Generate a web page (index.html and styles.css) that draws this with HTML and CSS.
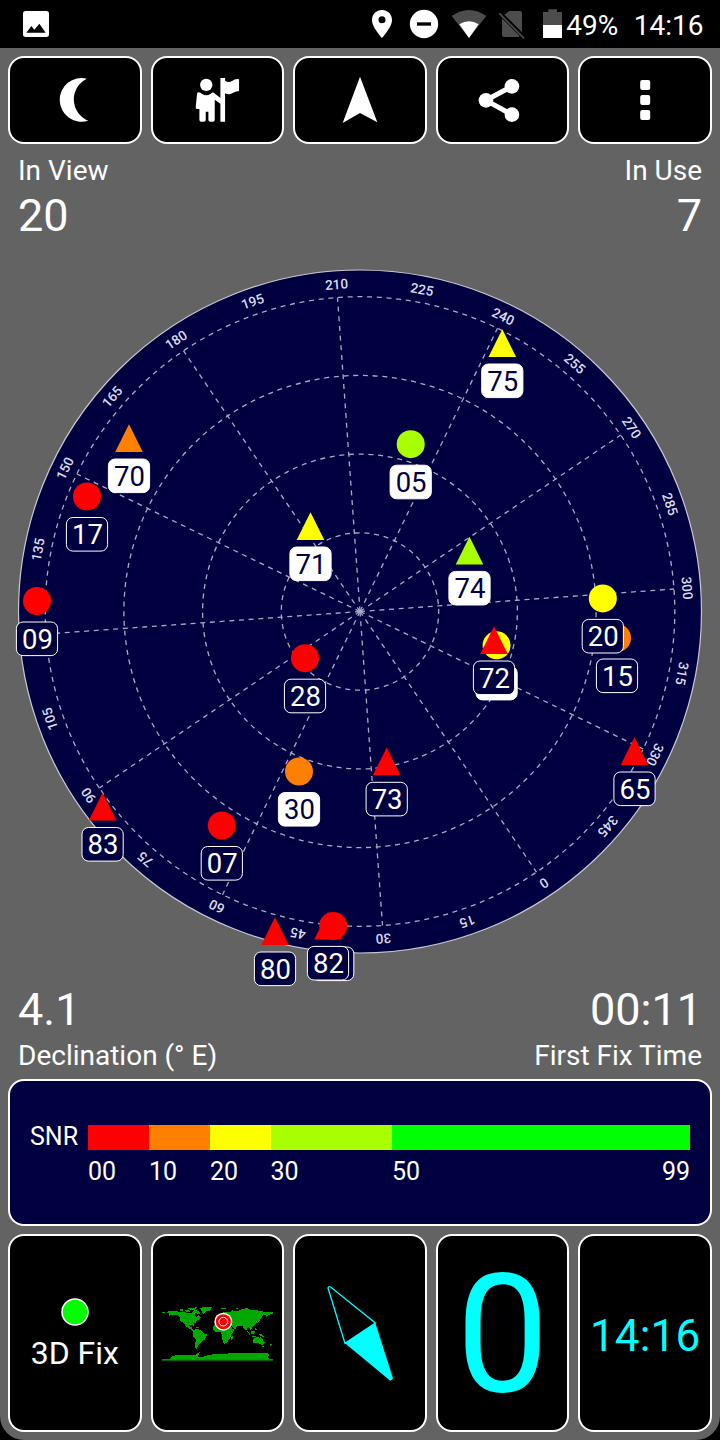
FILE: index.html
```html
<!DOCTYPE html>
<html lang="en">
<head>
<meta charset="utf-8">
<title>GPS Status</title>
<link rel="stylesheet" href="styles.css">
</head>
<body>
<div class="phone">
  <header class="status">
    <svg class="status-photo" width="26" height="48" viewBox="69 0 78 144"><rect x="69" y="33" width="78" height="78" rx="8" fill="#fff"/><path d="M79 98L94 78L103 89L118 71L137 98Z" fill="#000"/></svg>
    <div class="status-right">
      <svg width="32" height="48" viewBox="36 0 96 144"><path fill="#fff" fill-rule="evenodd" d="M66 30C49 30 36 43 36 60C36 82 66 114 66 114C66 114 96 82 96 60C96 43 83 30 66 30ZM66 49A10.500 10.500 0 1 1 66 70A10.500 10.500 0 1 1 66 49Z"/></svg>
      <svg width="40" height="48" viewBox="132 0 120 144"><circle cx="192" cy="72" r="42.500" fill="#fff"/><path d="M171 67H213V77H171Z"/></svg>
      <svg width="50" height="48" viewBox="252 0 150 144"><path fill="#4d4d4d" d="M327 114L275 48Q327 12 379 48Z"/><path fill="#fff" d="M327 114L298 73Q327 54 356 73Z"/></svg>
      <svg width="40" height="48" viewBox="402 0 120 144"><path fill="#4d4d4d" d="M448 33H480Q486 33 486 40V97L433 44ZM426 55L479 108Q477 111 474 111H433Q426 111 426 104Z"/><path stroke="#4d4d4d" stroke-width="5" d="M418 40L492 115"/></svg>
      <svg width="32" height="48" viewBox="522 0 96 144"><path fill="#4d4d4d" d="M549 36H565V28H591V36H606V75H549Z"/><path fill="#fff" d="M549 75H606V114H549Z"/></svg>
      <span class="battery">49%</span>
      <span class="time">14:16</span>
    </div>
  </header>

  <main class="app">
    <nav class="cards toolbar">
      <button class="card"><svg class="icon" viewBox="135.600 210 180 180"><path d="M261 236A65.500 65.500 0 1 0 265 362A69 69 0 0 1 261 236Z"/></svg></button>
      <button class="card"><svg class="icon" viewBox="562.800 210 180 180"><circle cx="620.500" cy="254.500" r="18.500"/><path d="M597 277Q604 277 608 282Q621 290 633 282Q638 276 643 278L663 294V234H677V242Q687 249 698 243Q708 235 719 238V273Q708 274 698 280Q688 286 677 280V365H663V311L646 299V360Q646 365 640 365H633Q627 365 627 360V335H619V360Q619 365 613 365H606Q600 365 600 360V327H593Q588 327 589 320L593 281Q594 277 597 277Z"/></svg></button>
      <button class="card"><svg class="icon" viewBox="990 210 180 180"><path d="M1080 230L1132 367L1080 339L1028 369Z"/></svg></button>
      <button class="card"><svg class="icon" viewBox="337.200 210 180 180"><path d="M454 259L376 301L454 344" fill="none" stroke="#fff" stroke-width="15"/><circle cx="454" cy="259" r="22"/><circle cx="376" cy="301" r="22"/><circle cx="454" cy="344" r="22"/></svg></button>
      <button class="card"><svg class="icon" viewBox="764.400 210 180 180"><rect x="840" y="240" width="30" height="30" rx="6"/><rect x="840" y="285" width="30" height="30" rx="6"/><rect x="840" y="330" width="30" height="30" rx="6"/></svg></button>
    </nav>

    <section class="stats stats-top">
      <div class="stat"><span class="label">In View</span><span class="value">20</span></div>
      <div class="stat stat-end"><span class="label">In Use</span><span class="value">7</span></div>
    </section>

    <svg class="sky" width="720" height="736" viewBox="0 244 720 736">
      <circle class="disc" cx="360" cy="611.500" r="341.500"/>
      <g id="grid" class="grid"></g>
      <g id="azimuths" class="azimuths"></g>
      <g id="sats" class="sats"></g>
    </svg>

    <section class="stats stats-bottom">
      <div class="stat"><span class="value">4.1</span><span class="label">Declination (° E)</span></div>
      <div class="stat stat-end"><span class="value">00:11</span><span class="label">First Fix Time</span></div>
    </section>

    <section class="snr">
      <span class="snr-name">SNR</span>
      <div class="snr-scale">
        <div class="seg red"></div><div class="seg orange"></div><div class="seg yellow"></div><div class="seg lime"></div><div class="seg green"></div>
        <span>00</span><span>10</span><span>20</span><span>30</span><span class="ends">50<b>99</b></span>
      </div>
    </section>

    <section class="cards widgets">
      <div class="card fix"><svg width="28" height="28" viewBox="0 0 28 28"><circle cx="14" cy="14" r="13" fill="#0f0" stroke="#fff" stroke-width="1.500"/></svg><span>3D Fix</span></div>
      <div class="card map-card">
        <svg class="map" viewBox="30 45 345 172" width="115" height="57.330">
          <g class="land">
            <path d="M36 65H46V68H36ZM52 68L56 64L75 63L100 67L116 68L124 71L130 62L137 67L134 74L139 81L146 75L152 83L147 90L140 91L138 97L131 101L132 108L126 104L118 105L119 112L127 110L126 117L133 121L128 123L117 115L108 109L101 100L92 93L88 80L82 74L67 74L57 78L59 72Z"/>
            <path d="M87 59L94 57L101 60L94 64ZM103 61L115 60L119 65L108 66ZM113 55L128 53L143 52L137 58L127 60L118 58ZM131 60L145 62L151 70L145 73L138 67Z"/>
            <path d="M147 54L164 51L185 52L183 60L176 63L167 65L162 72L155 68L154 59Z"/>
            <path d="M131 122L138 117L148 119L156 124L159 129L171 134L168 142L164 149L156 153L151 161L145 166L140 179L136 175L135 163L138 150L130 141L128 132Z"/>
            <path d="M137 110L147 112L146 115L139 113Z"/>
            <path d="M199 99L219 98L241 102L248 117L253 119L247 129L242 136L241 145L236 150L231 160L222 161L217 150L216 136L211 126L196 125L188 117L189 108Z"/>
            <path d="M244 140L249 137L248 148L244 151Z"/>
            <path d="M202 82L215 75L221 65L240 67L248 61L260 64L274 58L290 54L302 60L330 62L345 66L369 67L367 72L356 74L350 82L346 75L337 77L333 87L325 88L322 96L315 102L312 109L304 110L306 117L302 121L297 112L293 112L289 122L283 117L278 108L267 108L261 110L255 118L249 114L242 103L232 97L219 99L200 95Z"/>
            <path d="M213 54H229V56H213ZM254 56L265 54L263 58H255ZM325 87L330 84L331 91L325 97L321 99L325 93ZM301 126L307 122L315 124L313 132L304 131ZM291 122L299 130L303 136L298 134ZM315 113L320 119L317 123ZM323 131L337 134L344 141L332 139ZM305 138H318V140H305Z"/>
            <path d="M308 150L315 144L324 141L329 145L333 140L338 149L344 158L339 165L331 163L325 158L309 160ZM358 168L363 161L368 162L361 170ZM337 167H341V170H337Z"/>
            <path d="M36 207H58L68 200L62 197L88 196L102 194L134 195L143 190L149 185L148 192L141 199L157 201L173 196L195 192L247 190L256 188L291 190L304 188L350 188L359 195L352 204L369 208V213H36Z"/>
          </g>
          <path d="M36 211H369" stroke="#006000" stroke-width="4"/>
          <circle cx="220" cy="95" r="27" fill="#fff"/><circle cx="220" cy="95" r="22.500" fill="#f00"/><circle cx="220" cy="95" r="13" fill="none" stroke="#fff" stroke-width="3"/>
        </svg>
      </div>
      <div class="card"><svg width="100" height="120" viewBox="60 143 300 360"><path d="M165 354L114 188Q116 182 122 185L256 293Z" fill="none" stroke="#0ff" stroke-width="4"/><path d="M165 354L256 293L309 459Q306 466 299 465Z" fill="#0ff"/></svg></div>
      <div class="card speed">0</div>
      <div class="card clock">14:16</div>
    </section>
  </main>
</div>
<script src="sky.js"></script>
</body>
</html>
```
FILE: styles.css
```css
* { box-sizing: border-box; }
body { margin: 0; background: #000; color: #fff; font-family: Roboto, sans-serif; }
svg { display: block; flex: none; }
.phone { width: 720px; height: 1440px; background: #000; overflow: hidden; }
.status { height: 48px; display: flex; justify-content: space-between; padding: 0 16.5px 0 23px; }
.status-right { display: flex; }
.battery, .time { font-size: 28px; line-height: 51px; white-space: nowrap; }
.battery { width: 67.5px; }
.time { text-align: right; }
.app { height: 1392px; display: flex; flex-direction: column; background: #636363; border-radius: 0 0 24px 24px; padding: 8px 0; }
.cards { display: grid; grid-template-columns: repeat(5, 1fr); gap: 9px; margin: 0 8px; }
.card { display: flex; align-items: center; justify-content: center; background: #000; border: 2px solid #fff; border-radius: 16px; padding: 0; color: #0ff; font-family: inherit; }
.toolbar { height: 88px; }
.icon { width: 60px; height: 60px; fill: #fff; }
.stats { display: flex; justify-content: space-between; padding: 0 18px; }
.stats-top { height: 100px; padding-top: 10px; }
.stats-bottom { height: 99px; padding-top: 1px; }
.stat { display: flex; flex-direction: column; }
.stat-end { align-items: flex-end; }
.label { font-size: 28px; line-height: 33px; }
.value { font-size: 45px; line-height: 57px; }
.stats-bottom .value { line-height: 58px; }
.sky { overflow: visible; }
.disc { fill: #000040; stroke: #c8c8d0; stroke-width: 1.2; }
.grid { fill: none; stroke: #aaaac4; stroke-width: 1.3; stroke-dasharray: 5 4.7; }
.azimuths { font-size: 13.5px; font-weight: 500; fill: #dcdcec; text-anchor: middle; }
.sats { font-size: 27.5px; text-anchor: middle; }
.tag { fill: #000040; stroke: #fff; stroke-width: 1; }
.tag-used { fill: #fff; }
.num { fill: #fff; }
.num-used { fill: #000040; }
.snr { height: 147px; margin: 0 8px 8px; padding: 44px 20px 0; border: 2px solid #fff; border-radius: 16px; background: #000040; display: flex; font-size: 25px; line-height: 29px; }
.snr-name { width: 58px; margin-top: -3px; }
.snr-scale { width: 602px; display: grid; grid-template-columns: 61px 61px 60.500px 121.500px 298px; grid-template-rows: 24.500px 29px; row-gap: 7px; }
.red { background: #f00; }
.orange { background: #ff8000; }
.yellow { background: #ff0; }
.lime { background: #a8ff00; }
.green { background: #0f0; }
.ends { display: flex; justify-content: space-between; }
.ends b { font-weight: 400; }
.widgets { height: 198px; }
.fix { flex-direction: column; color: #fff; font-size: 32px; line-height: 38px; gap: 8px; padding-top: 4px; }
.map-card { padding-top: 2px; }
.land { fill: #00a800; shape-rendering: crispEdges; }
.speed { font-size: 165px; line-height: 190px; padding-top: 3px; }
.clock { font-size: 44px; line-height: 52px; padding-top: 5px; letter-spacing: 0.2px; }
```
FILE: sky.js
```js
const NS = "http://www.w3.org/2000/svg";
const CX = 360, CY = 611.5, RING = 78.7, HEADING = 214.1;

function add(parent, tag, attrs, text) {
  const el = document.createElementNS(NS, tag);
  for (const k in attrs) el.setAttribute(k, attrs[k]);
  if (text !== undefined) el.textContent = text;
  document.getElementById(parent).appendChild(el);
}

for (let i = 1; i <= 4; i++) {
  add("grid", "circle", { cx: CX, cy: CY, r: RING * i, transform: `rotate(${-HEADING} ${CX} ${CY})` });
}
for (let az = 0; az < 360; az += 15) {
  const rot = `rotate(${az - HEADING} ${CX} ${CY})`;
  if (az % 30 === 0) add("grid", "path", { d: `M${CX} ${CY}V${CY - RING * 4}`, transform: rot });
  add("azimuths", "text", { x: CX, y: CY - 323.2, transform: rot }, az);
}

// [id, x, y, shape, colour, used in fix]
const R = "#f00", O = "#ff8000", Y = "#ff0", L = "#a8ff00";
const sats = [
  ["75", 502.3, 343, "t", Y, 1], ["70", 129, 438, "t", O, 1], ["05", 410.7, 444.2, "c", L, 1],
  ["17", 87, 496.5, "c", R, 0], ["71", 310.5, 526, "t", Y, 1], ["74", 469.5, 550.4, "t", L, 1],
  ["09", 37, 601, "c", R, 0], ["28", 305, 658.2, "c", R, 0], ["15", 617, 638, "c", O, 0],
  ["20", 602.8, 598.4, "c", Y, 0], ["", 496.6, 645.3, "c", Y, 1], ["72", 494, 640, "t", R, 0],
  ["65", 634.5, 751, "t", R, 0], ["73", 386.7, 761.3, "t", R, 0], ["30", 299, 771.5, "c", O, 1],
  ["07", 221.8, 825.5, "c", R, 0], ["83", 102.6, 806.5, "t", R, 0], ["80", 275, 931, "t", R, 0],
  ["", 333.2, 926, "c", R, 0], ["82", 328, 925.4, "t", R, 0]
];
for (const [id, x, y, shape, fill, used] of sats) {
  if (shape === "c") add("sats", "circle", { cx: x, cy: y, r: 14, fill });
  else add("sats", "path", { d: `M${x} ${y - 13.7}L${x + 13.8} ${y + 14}H${x - 13.8}Z`, fill });
  add("sats", "rect", { class: used ? "tag tag-used" : "tag", x: x - 20.6, y: y + 21, width: 41.2, height: 33.6, rx: 6.5 });
  if (id) add("sats", "text", { class: used ? "num num-used" : "num", x: x + 0.4, y: y + 47.8 }, id);
}
```
